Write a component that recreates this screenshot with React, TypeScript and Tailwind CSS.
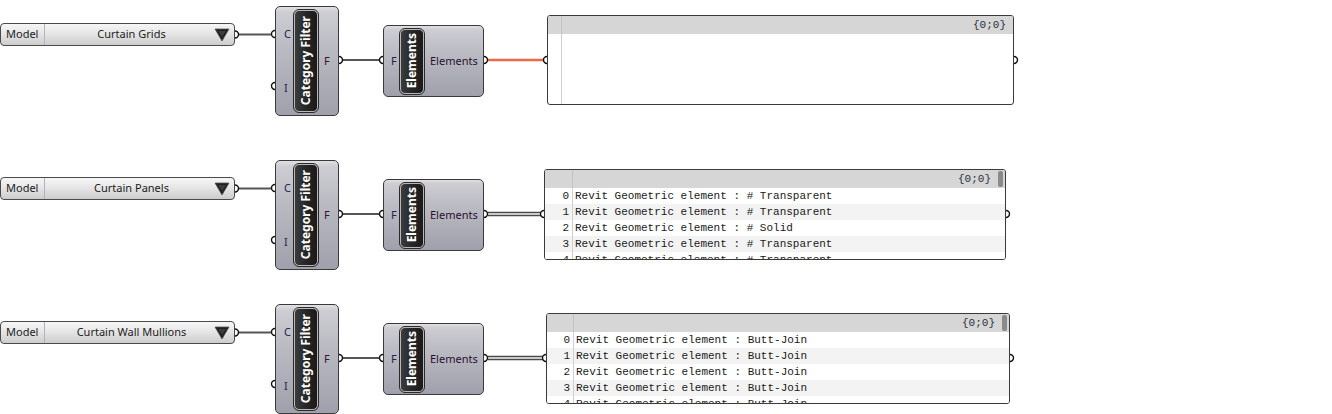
import React from "react";

type PanelData = {
  x: number;
  y: number;
  w: number;
  h: number;
  idx: number;
  lines: string[];
  scroll: boolean;
};

type Row = {
  listY: number;
  label: string;
  cfY: number;
  elY: number;
  panel: PanelData;
  double: boolean;
};

const T = "Revit Geometric element : # Transparent";
const S = "Revit Geometric element : # Solid";
const B = "Revit Geometric element : Butt-Join";

const rows: Row[] = [
  {
    listY: 23,
    label: "Curtain Grids",
    cfY: 6,
    elY: 25,
    panel: { x: 547, y: 15, w: 467, h: 90, idx: 14, lines: [], scroll: false },
    double: false,
  },
  {
    listY: 177,
    label: "Curtain Panels",
    cfY: 160,
    elY: 179,
    panel: { x: 544, y: 169, w: 462, h: 91, idx: 28, lines: [T, T, S, T, T], scroll: true },
    double: true,
  },
  {
    listY: 321,
    label: "Curtain Wall Mullions",
    cfY: 304,
    elY: 323,
    panel: { x: 546, y: 313, w: 464, h: 91, idx: 27, lines: [B, B, B, B, B], scroll: true },
    double: true,
  },
];

const ui = "font-['Noto_Sans','Open_Sans',sans-serif]";
const mono = "font-['Liberation_Mono','Courier_New',monospace]";

function ValueList({ y, label }: { y: number; label: string }) {
  return (
    <div
      className={`absolute left-0 w-[235px] h-[23px] rounded-[4px] border border-[#4a4a4a] bg-[linear-gradient(180deg,#f6f6f6_0%,#e6e6e6_45%,#cdcdcd_100%)] flex items-center text-[11px] text-[#1c1c1c] ${ui}`}
      style={{ top: y }}
    >
      <div className="w-[44px] h-full flex items-center pl-[5px] border-r border-[#b4b4b4]">Model</div>
      <div className="flex-1 text-center pl-[4px]">{label}</div>
      <svg width="16" height="14" viewBox="0 0 16 14" className="mr-[4px]">
        <polygon points="1,1 15,1 8,13" fill="#1e1e1e" stroke="#555" strokeWidth="0.8" />
        <polygon points="4,3 12,3 8,9" fill="#3c3c3c" />
      </svg>
    </div>
  );
}

const bodyCls =
  "absolute rounded-[5px] border border-[#3a3a3a] bg-[linear-gradient(180deg,#e0e0e4_0%,#cdcdd3_5%,#bcbcc4_35%,#a0a0ac_100%)]";

const barCls =
  "rounded-[5px] border border-[#b8b8b8] outline outline-1 outline-[#2a2a2a] bg-[linear-gradient(90deg,#3c3c3c_0%,#262626_50%,#1a1a1a_100%)] flex items-center justify-center";

const barText = `[writing-mode:vertical-rl] rotate-180 text-white font-bold text-[12px] leading-none ${ui}`;

function CategoryFilter({ y }: { y: number }) {
  return (
    <div className={`${bodyCls} left-[275px] w-[64px] h-[110px] flex`} style={{ top: y }}>
      <div className={`w-[18px] h-full flex flex-col justify-around pl-[8px] text-[11px] text-[#2a2050] ${ui}`}>
        <span>C</span>
        <span>I</span>
      </div>
      <div className={`${barCls} w-[24px] my-[3px]`}>
        <span className={barText}>Category Filter</span>
      </div>
      <div className={`flex-1 flex items-center pl-[6px] text-[11px] text-[#3a1030] ${ui}`}>F</div>
    </div>
  );
}

function ElementsNode({ y }: { y: number }) {
  return (
    <div className={`${bodyCls} left-[383px] w-[101px] h-[72px] flex items-center`} style={{ top: y }}>
      <div className={`w-[16px] h-full flex items-center pl-[7px] text-[11px] text-[#2a2050] ${ui}`}>F</div>
      <div className={`${barCls} w-[24px] h-[65px]`}>
        <span className={barText}>Elements</span>
      </div>
      <div className={`flex-1 pl-[6px] text-[11px] text-[#2a1030] ${ui}`}>Elements</div>
    </div>
  );
}

function Panel({ p }: { p: PanelData }) {
  return (
    <div
      className={`absolute rounded-[3px] border border-[#3a3a3a] bg-white overflow-hidden flex flex-col text-[11px] text-[#1a1a1a] ${mono}`}
      style={{ left: p.x, top: p.y, width: p.w, height: p.h }}
    >
      <div className="h-[18px] shrink-0 bg-[#d6d6d6] flex items-center">
        <div className="h-full border-r border-[#c4c4c4]" style={{ width: p.idx }} />
        <div className="flex-1 text-right pr-[7px] text-[11px] text-[#2a3040] leading-none">{"{0;0}"}</div>
        {p.scroll && <div className="w-[5px] h-[16px] rounded-[2px] bg-[#8a8a8a] mr-[2px] self-start mt-[1px]" />}
      </div>
      {p.lines.length === 0 ? (
        <div className="flex-1 flex">
          <div className="h-full border-r border-[#d0d0d0]" style={{ width: p.idx }} />
        </div>
      ) : (
        p.lines.map((l, i) => (
          <div
            key={i}
            className={`h-[16px] shrink-0 flex leading-[17px] ${i % 2 === 1 ? "bg-[#f3f3f3]" : "bg-white"}`}
          >
            <div className="h-full border-r border-[#d0d0d0] text-right pr-[3px]" style={{ width: p.idx }}>
              {i}
            </div>
            <div className="pl-[2px] whitespace-pre">{l}</div>
          </div>
        ))
      )}
    </div>
  );
}

function outGrip(x: number, y: number, k: string) {
  return (
    <path key={k} d={`M ${x} ${y - 3.5} A 3.5 3.5 0 0 1 ${x} ${y + 3.5}`} fill="white" stroke="#111" strokeWidth="1.4" />
  );
}
function inGrip(x: number, y: number, k: string) {
  return (
    <path key={k} d={`M ${x} ${y - 3.5} A 3.5 3.5 0 0 0 ${x} ${y + 3.5}`} fill="white" stroke="#111" strokeWidth="1.4" />
  );
}

export default function App() {
  return (
    <div className="relative w-[1332px] h-[414px] bg-white overflow-hidden">
      {rows.map((r, i) => (
        <React.Fragment key={i}>
          <ValueList y={r.listY} label={r.label} />
          <CategoryFilter y={r.cfY} />
          <ElementsNode y={r.elY} />
          <Panel p={r.panel} />
        </React.Fragment>
      ))}
      <svg className="absolute inset-0 pointer-events-none" width="1332" height="414">
        {rows.map((r, i) => {
          const cy = r.listY + 11.5;
          const iy = r.cfY + 80;
          const fy = r.cfY + 54;
          const ey = r.elY + 35;
          const py = r.panel.y + 45;
          const pr = r.panel.x + r.panel.w;
          return (
            <g key={i}>
              <line x1="239" y1={cy} x2="271" y2={cy} stroke="#555" strokeWidth="2" />
              <line x1="343" y1={fy} x2="379" y2={ey} stroke="#555" strokeWidth="2" />
              {r.double ? (
                <>
                  <line x1="488" y1={ey} x2={r.panel.x - 3} y2={py} stroke="#4a4a4a" strokeWidth="4.5" />
                  <line x1="488" y1={ey} x2={r.panel.x - 3} y2={py} stroke="#f4f4f4" strokeWidth="1.6" />
                </>
              ) : (
                <line x1="488" y1={ey} x2={r.panel.x - 3} y2={py} stroke="#ee6a45" strokeWidth="2.5" />
              )}
              {outGrip(235, cy, "a")}
              {inGrip(275, r.cfY + 28, "b")}
              {inGrip(275, iy, "c")}
              {outGrip(339, fy, "d")}
              {inGrip(383, ey, "e")}
              {outGrip(484, ey, "f")}
              {inGrip(r.panel.x, py, "g")}
              {outGrip(pr, py, "h")}
            </g>
          );
        })}
      </svg>
    </div>
  );
}
